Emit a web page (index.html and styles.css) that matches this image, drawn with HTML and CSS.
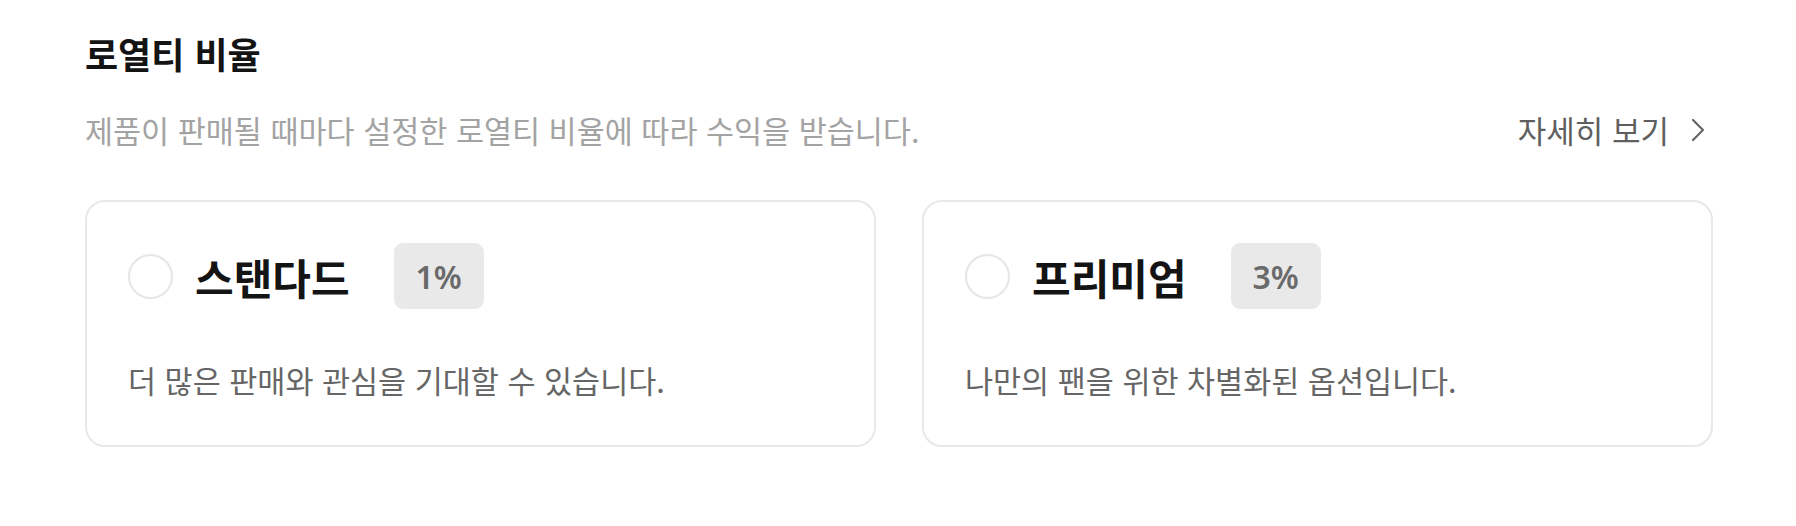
FILE: index.html
```html
<!DOCTYPE html>
<html lang="ko">
<head>
<meta charset="utf-8">
<link rel="stylesheet" href="styles.css">
</head>
<body>
<section class="royalty">
  <h2 class="royalty-title">로열티 비율</h2>
  <div class="royalty-sub">
    <p class="royalty-desc">제품이 판매될 때마다 설정한 로열티 비율에 따라 수익을 받습니다.</p>
    <a class="more-link" href="#">자세히 보기
      <svg class="chev" width="14" height="24" viewBox="0 0 14 24"><path d="M2 2 L12 12 L2 22" fill="none" stroke="#666" stroke-width="2.2" stroke-linecap="round" stroke-linejoin="round"/></svg>
    </a>
  </div>
  <div class="options">
    <label class="option">
      <div class="option-head">
        <span class="radio"></span>
        <span class="option-name">스탠다드</span>
        <span class="badge">1%</span>
      </div>
      <p class="option-text">더 많은 판매와 관심을 기대할 수 있습니다.</p>
    </label>
    <label class="option">
      <div class="option-head">
        <span class="radio"></span>
        <span class="option-name">프리미엄</span>
        <span class="badge">3%</span>
      </div>
      <p class="option-text">나만의 팬을 위한 차별화된 옵션입니다.</p>
    </label>
  </div>
</section>
</body>
</html>
```

FILE: styles.css
```css
html, body {
  margin: 0;
  padding: 0;
  background: #ffffff;
}
body {
  font-family: "Noto Sans CJK KR", "Noto Sans", sans-serif;
  color: #1a1a1a;
}
.royalty {
  width: 1628px;
  padding: 29px 0 0 85px;
}
.royalty-title {
  margin: 0;
  font-size: 36px;
  line-height: 48px;
  font-weight: 700;
  color: #141414;
}
.royalty-sub {
  margin-top: 32px;
  display: flex;
  justify-content: space-between;
  align-items: center;
}
.royalty-desc {
  margin: 0;
  font-size: 30.5px;
  line-height: 42px;
  color: #a3a3a3;
}
.more-link {
  display: flex;
  align-items: center;
  gap: 22px;
  font-size: 31px;
  line-height: 42px;
  color: #5f5f5f;
  text-decoration: none;
  padding-right: 8px;
}
.chev {
  display: block;
}
.options {
  margin-top: 49px;
  display: grid;
  grid-template-columns: 1fr 1fr;
  gap: 46px;
}
.option {
  display: block;
  border: 2px solid #e8e8e8;
  border-radius: 20px;
  padding: 41px 41px 44px;
}
.option-head {
  display: flex;
  align-items: center;
  height: 66px;
}
.radio {
  width: 41px;
  height: 41px;
  border: 2px solid #e6e6e6;
  border-radius: 50%;
  flex: none;
}
.option-name {
  margin-left: 22px;
  font-size: 42px;
  font-weight: 700;
  color: #141414;
}
.badge {
  margin-left: 44px;
  height: 66px;
  padding: 0 22px;
  display: flex;
  align-items: center;
  background: #e9e9e9;
  border-radius: 9px;
  font-family: "Noto Sans", sans-serif;
  font-size: 32px;
  font-weight: 600;
  color: #6a6a6a;
}
.option-text {
  margin: 50px 0 0;
  font-size: 30.5px;
  line-height: 42px;
  color: #666666;
}
```
